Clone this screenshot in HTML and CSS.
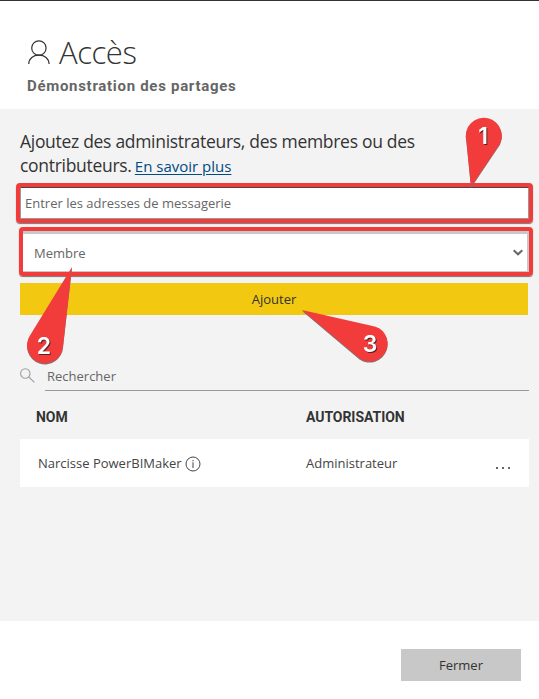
FILE: index.html
```html
<!DOCTYPE html>
<html lang="fr">
<head>
<meta charset="utf-8">
<title>Accès</title>
<link rel="stylesheet" href="styles.css">
</head>
<body>
<div class="panel">
  <header class="header">
    <div class="heading">
      <svg class="person" width="24" height="26" viewBox="0 0 24 26" fill="none" stroke="#333" stroke-width="1.2"><circle cx="11.9" cy="9" r="7.2"/><path d="M1.700 25C1.900 19.300 6.300 16.200 11.900 16.200S21.900 19.300 22.100 25"/></svg>
      <h1 class="title">Accès</h1>
    </div>
    <h2 class="subtitle">Démonstration des partages</h2>
  </header>
  <main class="content">
    <p class="intro"><span class="line-one">Ajoutez des administrateurs, des membres ou des</span><br><span class="line-two">contributeurs.</span> <a class="link">En savoir plus</a></p>
    <div class="frame frame-email"><div class="field email"><span class="email-text">Entrer les adresses de messagerie</span></div></div>
    <div class="frame frame-role"><div class="field role"><span class="role-text">Membre</span><svg width="12" height="8" viewBox="0 0 12 8" fill="none" stroke="#666" stroke-width="2"><path d="M1.700 1.300L6 5.300L10.300 1.300"/></svg></div></div>
    <div class="add"><span class="add-text">Ajouter</span></div>
    <div class="search">
      <svg class="glass" width="16" height="16" viewBox="0 0 16 16" fill="none" stroke="#a0a0a0" stroke-width="1.1"><circle cx="5.300" cy="5.500" r="4.700"/><path d="M8.800 9L14.300 14.300"/></svg>
      <div class="query"><span class="query-text">Rechercher</span></div>
    </div>
    <div class="row head"><span class="col-name"><span class="nom">NOM</span></span><span class="autorisation">AUTORISATION</span></div>
    <div class="row user">
      <span class="col-name"><span class="name">Narcisse PowerBIMaker</span><svg class="info" width="16" height="16" viewBox="0 0 16 16"><circle cx="8" cy="8" r="7" fill="none" stroke="#444"/><path d="M7.500 4h1v1.200h-1zM7.500 6.300h1V12h-1z" fill="#444"/></svg></span>
      <span class="permission">Administrateur</span>
      <svg class="more" width="16" height="4" viewBox="0 0 16 4" fill="#666"><path d="M1 1h2v2H1zM7 1h2v2H7zM13 1h2v2h-2z"/></svg>
    </div>
  </main>
  <footer class="footer"><div class="close"><span class="close-text">Fermer</span></div></footer>
  <svg class="callouts" width="539" height="699" viewBox="0 0 539 699">
    <g class="pin">
      <path d="M471 187L466.300 140A18 18 0 1 1 497.500 147.500Z"/>
      <path d="M72 267L63 346.500A18 18 0 1 1 30 335.500Z"/>
      <path d="M302 310L371.500 325.700A18 18 0 1 1 359.500 358.500Z"/>
    </g>
    <g class="number">
      <text x="483" y="144">1</text>
      <text x="44" y="354">2</text>
      <text x="370" y="352">3</text>
    </g>
  </svg>
</div>
</body>
</html>
```

FILE: styles.css
```css
* { box-sizing: border-box; }
body { margin: 0; background: #fff; font-family: "Open Sans", "Noto Sans", sans-serif; font-size: 13px; color: #333; }
.panel { position: relative; width: 539px; height: 699px; display: flex; flex-direction: column; overflow: hidden; }
.header { height: 109px; flex: none; border-top: 1px solid #333; padding: 30px 0 0 27px; }
.heading { display: flex; height: 43px; }
.person { margin-top: 8px; }
.title { margin: 0 0 0 8px; font-size: 31px; font-weight: 300; line-height: 42px; letter-spacing: -.4px; }
.subtitle { margin: 0; padding-top: 2px; font: bold 15px/21px Roboto, sans-serif; letter-spacing: .7px; color: #666; }
.content { flex: 1; background: #f3f3f3; padding: 20px 10px 0 20px; }
.intro { margin: 0; height: 54px; font-size: 17.5px; line-height: 24px; letter-spacing: -.3px; white-space: nowrap; }
.link { font-size: 15px; letter-spacing: 0; margin-left: -1px; color: #004b80; text-decoration: underline; text-underline-offset: 2px; }
.frame { border: 4px solid #f23c3c; border-radius: 4px; box-shadow: 0 1px 1px #777; }
.frame-email { margin: 0 -4px 0 -4px; height: 40px; }
.frame-role { margin: 4px -4px 0 -1px; height: 49px; }
.field { height: 100%; background: #fff; display: flex; align-items: center; color: #666; }
.email { border: 1px solid #999; border-top-color: #444; padding-left: 4px; }
.role { border: solid #c8c8c8; border-width: 3px 2px 1px 0; padding: 0 3px 0 11px; justify-content: space-between; }
.add { margin: 7px 1px 0 0; height: 32px; background: #f2c811; display: flex; align-items: center; justify-content: center; }
.search { margin-top: 46px; height: 30px; display: flex; justify-content: space-between; }
.glass { margin-top: 7px; }
.query { width: 484px; border-bottom: 1px solid #999; padding-left: 2px; line-height: 30px; color: #666; }
.row { display: flex; align-items: center; width: 509px; height: 48px; }
.col-name { width: 286px; display: flex; align-items: center; }
.head { padding: 4px 0 0 16px; font: bold 14px Roboto, sans-serif; letter-spacing: -.05px; }
.head .col-name { width: 270px; }
.user { background: #fff; padding-left: 18px; color: #444; }
.user .col-name { width: 268px; }
.info { margin: 2px 0 0 3px; }
.more { margin: 10px 18px 0 auto; }
.footer { height: 78px; flex: none; padding: 28px 18px 0 0; display: flex; justify-content: flex-end; }
.close { width: 120px; height: 32px; background: #c8c8c8; display: flex; align-items: center; justify-content: center; }
.callouts { position: absolute; left: 0; top: 0; }
.pin { fill: #f23c3c; filter: drop-shadow(0 1px .5px #777); }
.number { fill: #fff; font: 600 23px Inter, sans-serif; text-anchor: middle; filter: drop-shadow(1px 1px .5px #522); }
```
